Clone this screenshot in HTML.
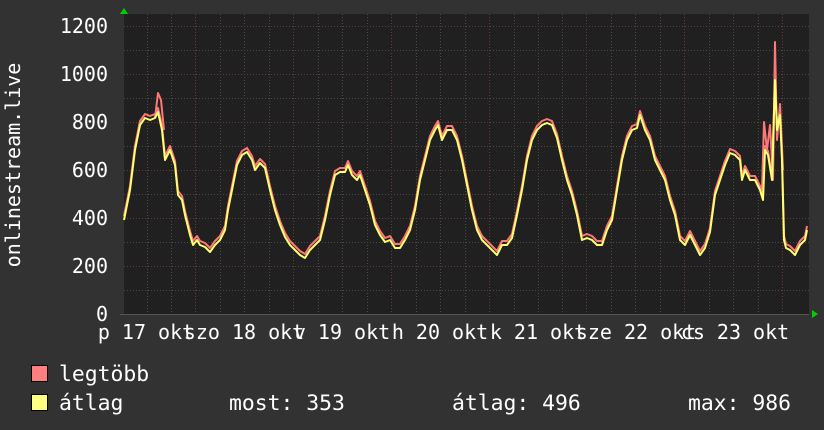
<!DOCTYPE html>
<html><head><meta charset="utf-8"><style>
html,body{margin:0;padding:0;background:#323232;}
svg{display:block}
text{font-family:"DejaVu Sans Mono","Liberation Mono",monospace;font-size:20px;fill:#fff}
.lg{font-size:21.4px}
</style></head><body>
<svg width="824" height="430" viewBox="0 0 824 430" xmlns="http://www.w3.org/2000/svg">
<rect width="824" height="430" fill="#323232"/>
<rect x="124" y="14" width="685" height="300" fill="#202020"/>
<g stroke="#4a4a4a" stroke-width="1" stroke-dasharray="1,2">
<line x1="124" x2="809" y1="50.5" y2="50.5"/><line x1="124" x2="809" y1="98.5" y2="98.5"/>
<line x1="124" x2="809" y1="146.5" y2="146.5"/><line x1="124" x2="809" y1="194.5" y2="194.5"/>
<line x1="124" x2="809" y1="242.5" y2="242.5"/><line x1="124" x2="809" y1="290.5" y2="290.5"/>
<line x1="147.5" x2="147.5" y1="14" y2="314"/><line x1="171.5" x2="171.5" y1="14" y2="314"/>
<line x1="220.5" x2="220.5" y1="14" y2="314"/><line x1="244.5" x2="244.5" y1="14" y2="314"/><line x1="269.5" x2="269.5" y1="14" y2="314"/>
<line x1="318.5" x2="318.5" y1="14" y2="314"/><line x1="342.5" x2="342.5" y1="14" y2="314"/><line x1="367.5" x2="367.5" y1="14" y2="314"/>
<line x1="416.5" x2="416.5" y1="14" y2="314"/><line x1="440.5" x2="440.5" y1="14" y2="314"/><line x1="465.5" x2="465.5" y1="14" y2="314"/>
<line x1="514.5" x2="514.5" y1="14" y2="314"/><line x1="538.5" x2="538.5" y1="14" y2="314"/><line x1="562.5" x2="562.5" y1="14" y2="314"/>
<line x1="611.5" x2="611.5" y1="14" y2="314"/><line x1="635.5" x2="635.5" y1="14" y2="314"/><line x1="660.5" x2="660.5" y1="14" y2="314"/>
<line x1="709.5" x2="709.5" y1="14" y2="314"/><line x1="733.5" x2="733.5" y1="14" y2="314"/><line x1="758.5" x2="758.5" y1="14" y2="314"/>
</g>
<g stroke="#6a3a3a" stroke-width="1" stroke-dasharray="1,2">
<line x1="124" x2="809" y1="26.5" y2="26.5"/><line x1="124" x2="809" y1="74.5" y2="74.5"/>
<line x1="124" x2="809" y1="122.5" y2="122.5"/><line x1="124" x2="809" y1="170.5" y2="170.5"/>
<line x1="124" x2="809" y1="218.5" y2="218.5"/><line x1="124" x2="809" y1="266.5" y2="266.5"/>
<line x1="195.5" x2="195.5" y1="14" y2="314"/><line x1="293.5" x2="293.5" y1="14" y2="314"/>
<line x1="391.5" x2="391.5" y1="14" y2="314"/><line x1="489.5" x2="489.5" y1="14" y2="314"/>
<line x1="586.5" x2="586.5" y1="14" y2="314"/><line x1="684.5" x2="684.5" y1="14" y2="314"/><line x1="782.5" x2="782.5" y1="14" y2="314"/>
</g>
<line x1="120" x2="809" y1="314.5" y2="314.5" stroke="#555"/>
<polygon points="120,14 124,8 128,14" fill="#00d000"/>
<polygon points="812,310 818,314 812,318" fill="#00d000"/>
<g fill="none" stroke-width="2" stroke-linejoin="round">
<polyline stroke="#ff7878" transform="translate(0,-4)" points="124,220 130,190 135,150 140,125 145,118 150,120 155,118 158,112 162,130 165,160 170,150 175,165 178,195 182,200 185,215 190,235 193,245 197,240 200,245 205,247 210,252 215,245 220,240 225,230 228,210 232,190 237,165 242,155 247,152 252,160 255,170 260,163 265,168 270,190 275,210 280,225 285,237 290,245 295,250 300,255 305,258 310,250 315,245 320,240 325,220 330,195 335,175 340,172 345,172 348,165 352,175 357,180 360,175 365,190 370,205 375,225 380,235 385,242 390,240 395,248 400,248 405,240 410,230 415,210 420,180 425,160 430,140 435,130 438,125 442,140 447,130 452,130 457,140 462,160 467,185 472,210 477,230 482,240 487,245 492,250 497,255 502,245 507,245 512,238 517,215 522,190 527,160 532,140 537,130 542,125 547,123 552,125 557,138 562,160 567,180 572,195 577,215 582,240 587,238 592,240 597,245 602,245 607,230 612,220 617,190 622,160 627,140 632,130 637,128 640,115 645,130 650,140 655,160 660,170 665,180 670,200 675,215 680,240 685,245 690,235 695,245 700,255 705,248 710,232 715,195 720,180 725,165 730,153 735,155 740,160 742,180 745,170 750,180 755,180 760,190 763,200 765,150 768,155 772,180 775,80 777,130 780,115 782,160 784,240 786,248 790,250 795,255 800,245 805,240 807,230"/>
<polyline stroke="#ff7878" points="155,118 158,93 161,100 164,130"/>
<polyline stroke="#ff7878" points="762,190 764,122 767,150 770,125 773,180 775,42 777,140 780,104 783,170"/>
<polyline stroke="#ffff70" points="124,220 130,190 135,150 140,125 145,118 150,120 155,118 158,112 162,130 165,160 170,150 175,165 178,195 182,200 185,215 190,235 193,245 197,240 200,245 205,247 210,252 215,245 220,240 225,230 228,210 232,190 237,165 242,155 247,152 252,160 255,170 260,163 265,168 270,190 275,210 280,225 285,237 290,245 295,250 300,255 305,258 310,250 315,245 320,240 325,220 330,195 335,175 340,172 345,172 348,165 352,175 357,180 360,175 365,190 370,205 375,225 380,235 385,242 390,240 395,248 400,248 405,240 410,230 415,210 420,180 425,160 430,140 435,130 438,125 442,140 447,130 452,130 457,140 462,160 467,185 472,210 477,230 482,240 487,245 492,250 497,255 502,245 507,245 512,238 517,215 522,190 527,160 532,140 537,130 542,125 547,123 552,125 557,138 562,160 567,180 572,195 577,215 582,240 587,238 592,240 597,245 602,245 607,230 612,220 617,190 622,160 627,140 632,130 637,128 640,115 645,130 650,140 655,160 660,170 665,180 670,200 675,215 680,240 685,245 690,235 695,245 700,255 705,248 710,232 715,195 720,180 725,165 730,153 735,155 740,160 742,180 745,170 750,180 755,180 760,190 763,200 765,150 768,155 772,180 775,80 777,130 780,115 782,160 784,240 786,248 790,250 795,255 800,245 805,240 807,230"/>
</g>
<g text-anchor="end">
<text x="108" y="33">1200</text><text x="108" y="81">1000</text><text x="108" y="129">800</text>
<text x="108" y="177">600</text><text x="108" y="225">400</text><text x="108" y="273">200</text><text x="108" y="321">0</text>
</g>
<text transform="translate(20,165) rotate(-90)" text-anchor="middle">onlinestream.live</text>
<g text-anchor="middle">
<text x="146" y="339">p 17 okt</text><text x="244" y="339">szo 18 okt</text><text x="342" y="339">v 19 okt</text>
<text x="440" y="339">h 20 okt</text><text x="538" y="339">k 21 okt</text><text x="636" y="339">sze 22 okt</text><text x="735" y="339">cs 23 okt</text>
</g>
<rect x="31.5" y="365.5" width="16" height="16" fill="#ff7f7f" stroke="#000"/>
<rect x="31.5" y="394.5" width="16" height="16" fill="#ffff80" stroke="#000"/>
<text class="lg" x="59" y="381">legtöbb</text>
<text class="lg" x="59" y="410">átlag</text>
<text class="lg" x="229" y="410">most: 353</text>
<text class="lg" x="452" y="410">átlag: 496</text>
<text class="lg" x="688" y="410">max: 986</text>
</svg>
</body></html>
